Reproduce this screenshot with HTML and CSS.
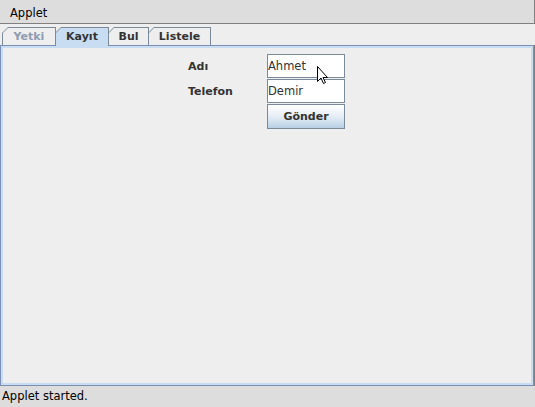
FILE: index.html
```html
<!DOCTYPE html>
<html>
<head>
<meta charset="utf-8">
<link rel="stylesheet" href="styles.css">
</head>
<body>
<div class="titlebar">Applet</div>
<div class="tabs">
  <div class="tab disabled"><span class="tab-face">Yetki</span></div>
  <div class="tab selected"><span class="tab-face">Kayıt</span></div>
  <div class="tab"><span class="tab-face">Bul</span></div>
  <div class="tab"><span class="tab-face">Listele</span></div>
</div>
<div class="panel">
  <div class="panel-inner">
    <div class="form">
      <label class="lbl">Adı</label>
      <div class="field">Ahmet</div>
      <label class="lbl">Telefon</label>
      <div class="field">Demir</div>
      <span></span>
      <div class="btn">Gönder</div>
    </div>
  </div>
</div>
<div class="status">Applet started.</div>
<svg class="cursor" width="12" height="19" viewBox="0 0 12 19"><path d="M0.5 0.5 L0.5 15.5 L4 12 L6.5 17.5 L8.5 16.5 L6 11.5 L10.5 11.5 Z" fill="#fff" stroke="#000" stroke-width="1" stroke-linejoin="miter"/></svg>
</body>
</html>
```
FILE: styles.css
```css
html, body {
  margin: 0;
  padding: 0;
}
body {
  width: 535px;
  height: 407px;
  overflow: hidden;
  background: #eeeeee;
  font-family: "DejaVu Sans", sans-serif;
  color: #333333;
  position: relative;
}
.titlebar {
  height: 20px;
  padding: 3px 0 0 10px;
  line-height: 20px;
  font-size: 11.5px;
  color: #000;
  background: #dddddd;
  border-bottom: 1px solid #808080;
  border-right: 1px solid #808080;
  box-sizing: content-box;
  width: 524px;
}
.tabs {
  display: flex;
  align-items: flex-start;
  height: 18px;
  padding: 3px 0 0 2px;
  position: relative;
  z-index: 1;
}
.tab {
  position: relative;
  box-sizing: border-box;
  height: 18px;
  padding: 1px 1px 0 1px;
  background: #7a8a99;
  clip-path: polygon(6px 0, 100% 0, 100% 100%, 0 100%, 0 6px);
  margin-left: -1px;
}
.tab:first-child { margin-left: 0; width: 54px; }
.tab:nth-child(2) { width: 54px; }
.tab:nth-child(3) { width: 41px; }
.tab:nth-child(4) { width: 63px; }
.tab-face {
  display: block;
  height: 17px;
  line-height: 17px;
  background: #eeeeee;
  clip-path: polygon(5px 0, 100% 0, 100% 100%, 0 100%, 0 5px);
  text-align: center;
  font-size: 11px;
  font-weight: bold;
  color: #333333;
}
.tab.disabled .tab-face { color: #8e9bb0; }
.tab.selected {
  height: 19px;
  margin-bottom: -1px;
  z-index: 2;
}
.tab.selected .tab-face {
  height: 18px;
  background: #c8ddf2;
}
.panel {
  box-sizing: border-box;
  width: 534px;
  height: 341px;
  border: 1px solid #7b8fb4;
  box-shadow: 1px 0 0 #808080;
}
.panel-inner {
  box-sizing: border-box;
  height: 100%;
  border: 2px solid #c8ddf2;
  background: #eeeeee;
  padding-top: 6px;
}
.form {
  display: grid;
  grid-template-columns: 79px 78px;
  grid-template-rows: 24px 24px 25px;
  row-gap: 1px;
  justify-content: start;
  margin-left: 185px;
}
.lbl {
  font-size: 11px;
  font-weight: bold;
  color: #333333;
  line-height: 24px;
  padding-top: 1px;
}
.field {
  box-sizing: border-box;
  border: 1px solid #7a8a99;
  background: #ffffff;
  font-size: 11.5px;
  line-height: 22px;
  padding-left: 0;
  color: #333333;
}
.btn {
  box-sizing: border-box;
  border: 1px solid #7a8a99;
  background: linear-gradient(#ffffff 0%, #eef3f9 35%, #dde8f3 60%, #b8cfe5 100%);
  font-size: 11px;
  font-weight: bold;
  text-align: center;
  line-height: 23px;
  color: #333333;
}
.status {
  height: 21px;
  line-height: 21px;
  padding-left: 2px;
  font-size: 11.5px;
  color: #000;
  background: #dddddd;
}
.cursor {
  position: absolute;
  left: 317px;
  top: 66px;
}
```
